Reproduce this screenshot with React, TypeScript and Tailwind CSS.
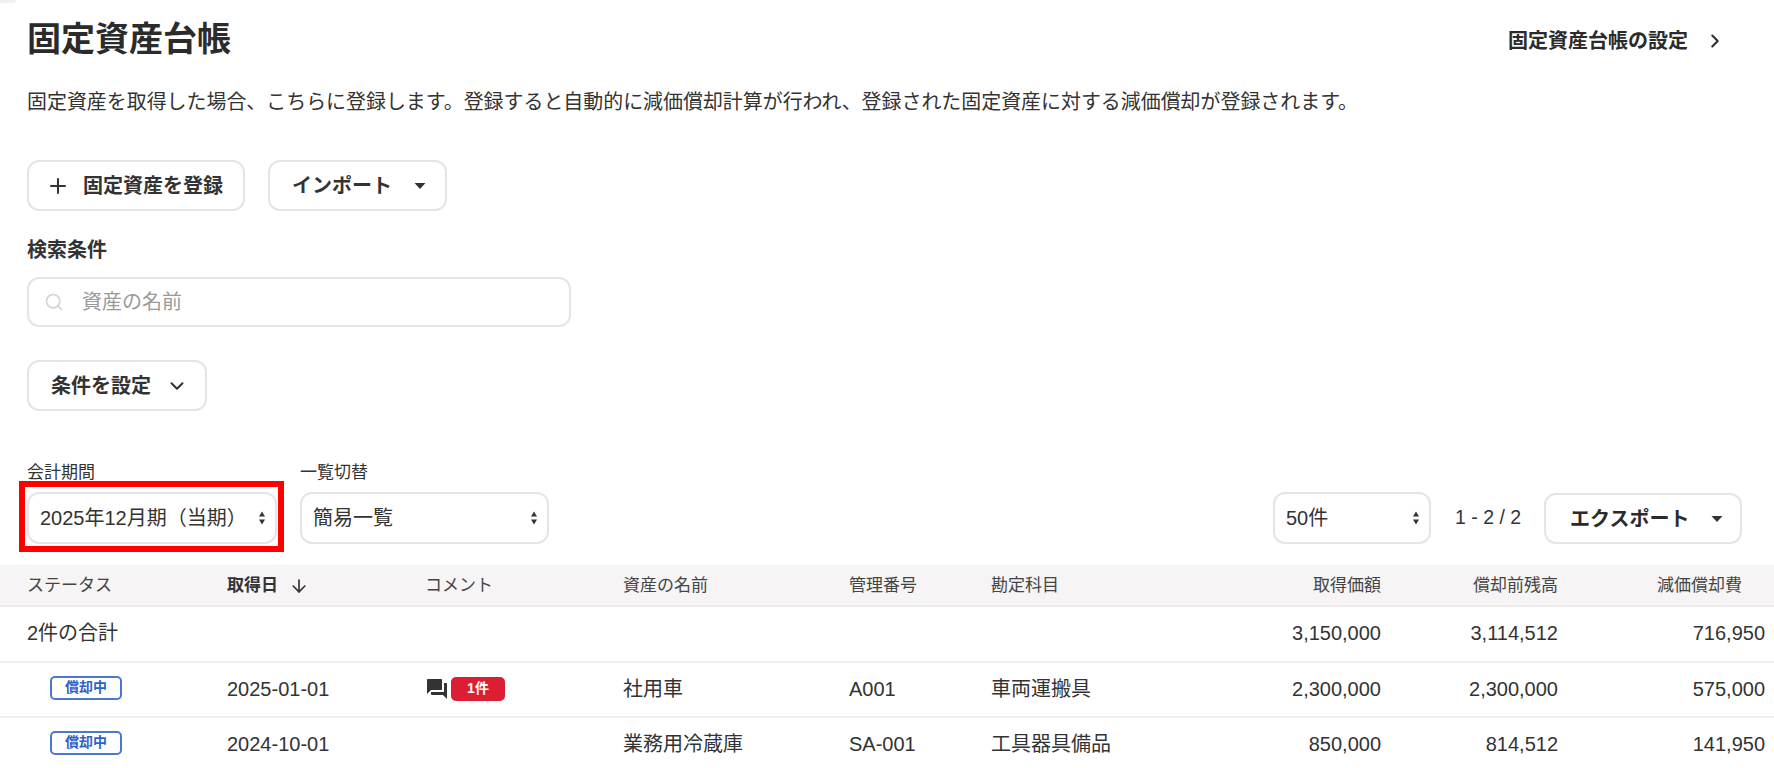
import { ArrowDown, ChevronDown, ChevronRight, Plus, Search } from "lucide-react";
import { MdForum } from "react-icons/md";

const rowGrid = "grid grid-cols-[200px_198px_198px_226px_142px_200px_190px_177px_207px] pl-[27px] items-center";

const rows = [
  { date: "2025-01-01", comments: 1, name: "社用車", code: "A001", account: "車両運搬具", cost: "2,300,000", balance: "2,300,000", dep: "575,000" },
  { date: "2024-10-01", comments: 0, name: "業務用冷蔵庫", code: "SA-001", account: "工具器具備品", cost: "850,000", balance: "814,512", dep: "141,950" },
];

function Caret() {
  return (
    <svg width="12" height="6" viewBox="0 0 12 6" className="text-[#333]">
      <path d="M0.5 0h11L6 6z" fill="currentColor" />
    </svg>
  );
}

function SelectBox({ value, className }: { value: string; className: string }) {
  return (
    <div className={`flex h-[52px] items-center justify-between rounded-[12px] border-2 border-[#e6e4e4] bg-white pl-[11px] pr-[9px] text-[20px] text-[#333] ${className}`}>
      <span className="whitespace-nowrap">{value}</span>
      <svg width="8" height="16" viewBox="0 0 8 16" className="text-[#333]">
        <path d="M4 1.5L7 6.5H1zM4 14.5L1 9.5h6z" fill="currentColor" />
      </svg>
    </div>
  );
}

function Badge() {
  return (
    <span className="mb-[2px] ml-[23px] flex h-[24px] w-[72px] items-center justify-center rounded-[5px] border-2 border-[#4a78d0] text-[14px] font-bold text-[#2f62c8]">
      償却中
    </span>
  );
}

export default function App() {
  return (
    <div className="relative h-[768px] w-[1774px] overflow-hidden bg-white font-['Liberation_Sans','Noto_Sans_CJK_JP',sans-serif] text-[#333]">
      <div className="absolute left-0 top-0 h-[3px] w-[16px] rounded-br-[3px] bg-[#f1f1f1]" />
      <div className="px-[27px]">
        <div className="flex items-center justify-between pt-[18px]">
          <h1 className="text-[34px] font-bold leading-[42px] text-[#2b2b2b]">固定資産台帳</h1>
          <a className="mr-[21px] mt-[3px] flex items-center gap-[16px] text-[20px] font-bold text-[#2b2b2b]">
            固定資産台帳の設定
            <ChevronRight size={22} strokeWidth={2.2} />
          </a>
        </div>

        <p className="mt-[28px] whitespace-nowrap text-[19.95px] leading-[28px]">
          固定資産を取得した場合、こちらに登録します。登録すると自動的に減価償却計算が行われ、登録された固定資産に対する減価償却が登録されます。
        </p>

        <div className="mt-[44px] flex gap-[23px]">
          <button className="flex h-[51px] w-[218px] items-center rounded-[12px] border-2 border-[#e6e4e4] pl-[17px] text-[20px] font-bold">
            <Plus size={24} strokeWidth={2} className="mr-[13px]" />
            固定資産を登録
          </button>
          <button className="flex h-[51px] w-[179px] items-center rounded-[12px] border-2 border-[#e6e4e4] pl-[22px] text-[20px] font-bold">
            インポート
            <span className="ml-[22px] flex"><Caret /></span>
          </button>
        </div>

        <h2 className="mt-[25px] text-[20px] font-bold leading-[28px]">検索条件</h2>

        <div className="mt-[13px] flex h-[50px] w-[544px] items-center rounded-[12px] border-2 border-[#e6e4e4] pl-[15px] text-[20px] text-[#9a9a9a]">
          <Search size={20} strokeWidth={2} className="mr-[18px] text-[#d4d4d4]" />
          資産の名前
        </div>

        <button className="mt-[33px] flex h-[51px] w-[180px] items-center rounded-[12px] border-2 border-[#e6e4e4] pl-[22px] text-[20px] font-bold">
          条件を設定
          <ChevronDown size={22} strokeWidth={2.2} className="ml-[15px]" />
        </button>

        <div className="mt-[50px] flex items-end">
          <div className="w-[273px]">
            <div className="text-[17px] leading-[24px]">会計期間</div>
            {/* red frame sits around the select, it is part of the annotated screenshot */}
            <div className="relative mt-[7px]">
              <SelectBox value="2025年12月期（当期）" className="w-[250px]" />
              <div className="absolute left-[-8px] top-[-11px] h-[71px] w-[265px] border-[6px] border-[#ff0000]" />
            </div>
          </div>
          <div className="w-[973px]">
            <div className="text-[17px] leading-[24px]">一覧切替</div>
            <SelectBox value="簡易一覧" className="mt-[7px] w-[249px]" />
          </div>
          <SelectBox value="50件" className="w-[158px]" />
          <span className="ml-[24px] w-[67px] whitespace-nowrap pb-[12px] text-[19.5px]">1 - 2 / 2</span>
          <button className="ml-[22px] flex h-[51px] w-[198px] items-center rounded-[12px] border-2 border-[#e6e4e4] pl-[24px] text-[20px] font-bold text-[#2b2b2b]">
            エクスポート
            <span className="ml-[22px] flex"><Caret /></span>
          </button>
        </div>
      </div>

      <div className="mt-[21px] text-[20px]">
        <div className={`${rowGrid} h-[42px] border-b-2 border-[#eceaea] bg-[#f6f4f4] pt-[2px] text-[17px] text-[#444]`}>
          <div>ステータス</div>
          <div className="flex items-center gap-[11px] font-bold text-[#333]">
            取得日
            <ArrowDown size={20} strokeWidth={2} />
          </div>
          <div>コメント</div>
          <div>資産の名前</div>
          <div>管理番号</div>
          <div>勘定科目</div>
          <div className="text-right">取得価額</div>
          <div className="text-right">償却前残高</div>
          <div className="pr-[23px] text-right">減価償却費</div>
        </div>

        <div className={`${rowGrid} h-[56px] border-b-2 border-[#eeeeee] pb-[2px]`}>
          <div className="col-span-6">2件の合計</div>
          <div className="text-right">3,150,000</div>
          <div className="text-right">3,114,512</div>
          <div className="text-right">716,950</div>
        </div>

        {rows.map((r) => (
          <div key={r.date} className={`${rowGrid} h-[55px] border-b-2 border-[#eeeeee] pb-[2px]`}>
            <Badge />
            <div>{r.date}</div>
            <div className="flex items-center gap-[2px]">
              {r.comments > 0 && (
                <>
                  <MdForum size={24} className="text-[#333]" />
                  <span className="flex h-[24px] w-[54px] items-center justify-center rounded-[5px] bg-[#dc1e32] text-[14px] font-bold text-white">
                    {r.comments}件
                  </span>
                </>
              )}
            </div>
            <div>{r.name}</div>
            <div>{r.code}</div>
            <div>{r.account}</div>
            <div className="text-right">{r.cost}</div>
            <div className="text-right">{r.balance}</div>
            <div className="text-right">{r.dep}</div>
          </div>
        ))}
      </div>
    </div>
  );
}
